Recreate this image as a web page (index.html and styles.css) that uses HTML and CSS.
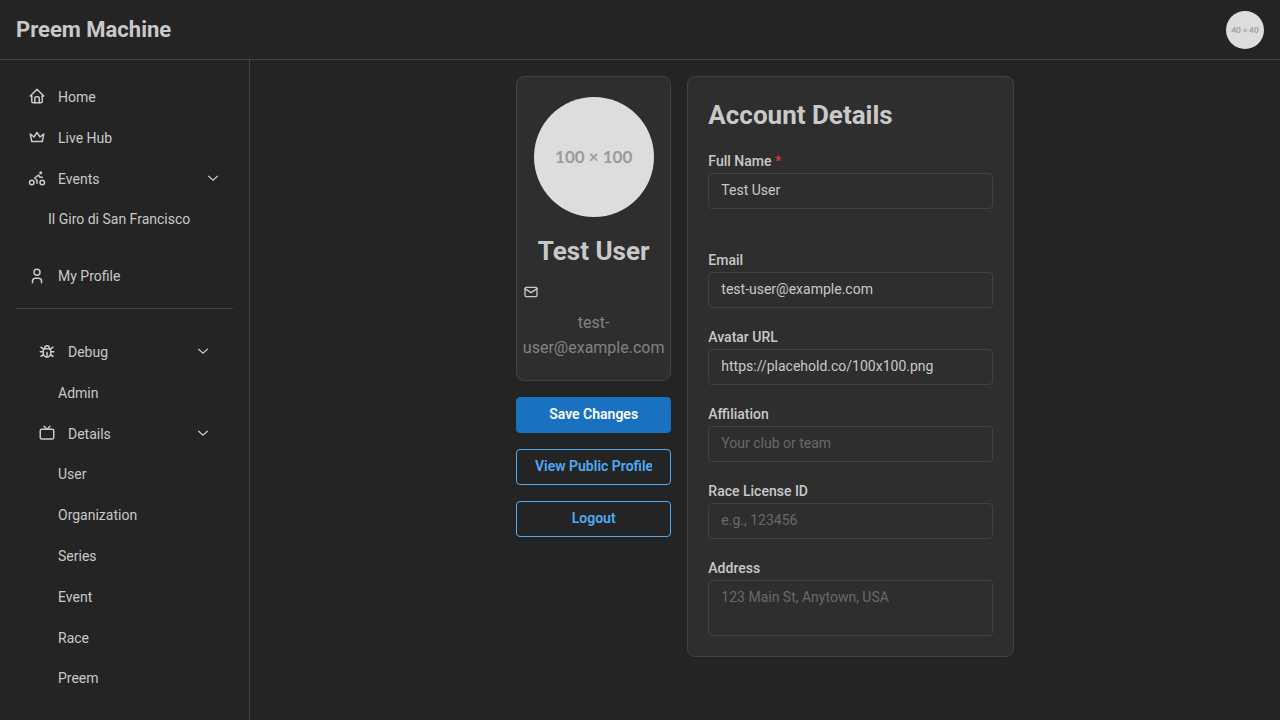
FILE: index.html
```html
<!DOCTYPE html>
<html lang="en">
<head>
<meta charset="utf-8">
<meta name="viewport" content="width=device-width, initial-scale=1">
<title>Preem Machine</title>
<link rel="stylesheet" href="styles.css">
</head>
<body>
<svg class="sprite" aria-hidden="true">
  <symbol id="chevron" viewBox="0 0 16 16"><path d="M3.6 6.2 8 10.2 12.4 6.2"/></symbol>
</svg>
<div class="shell">
  <header class="header">
    <h1 class="brand">Preem Machine</h1>
    <span class="avatar avatar-small">40 × 40</span>
  </header>

  <nav class="sidebar">
    <ul class="nav-list">
      <li><a class="nav-link" href="#">
        <svg class="icon" viewBox="0 0 24 24"><path d="M5 12H3l9-9 9 9h-2"/><path d="M5 12v7a2 2 0 0 0 2 2h10a2 2 0 0 0 2-2v-7"/><path d="M9 21v-6a2 2 0 0 1 2-2h2a2 2 0 0 1 2 2v6"/></svg>
        <span class="nav-body"><span class="nav-text">Home</span></span></a></li>
      <li><a class="nav-link" href="#">
        <svg class="icon" viewBox="0 0 24 24"><path d="m12 6 4 6 5-4-2 10H5L3 8l5 4z"/></svg>
        <span class="nav-body"><span class="nav-text">Live Hub</span></span></a></li>
      <li><a class="nav-link" href="#">
        <svg class="icon" viewBox="0 0 24 24"><circle cx="5" cy="18" r="3"/><circle cx="19" cy="18" r="3"/><path d="M12 19v-4l-3-3 5-4 2 3h3"/><circle cx="17" cy="5" r="1"/></svg>
        <span class="nav-body"><span class="nav-text">Events</span></span>
        <svg class="chevron"><use href="#chevron"/></svg></a>
        <ul class="nav-list nav-children">
          <li><a class="nav-link" href="#"><span class="nav-body"><span class="nav-text">Il Giro di San Francisco</span></span></a></li>
        </ul></li>
    </ul>
    <ul class="nav-list nav-profile">
      <li><a class="nav-link" href="#">
        <svg class="icon" viewBox="0 0 24 24"><circle cx="12" cy="7" r="4"/><path d="M6 21v-2a4 4 0 0 1 4-4h4a4 4 0 0 1 4 4v2"/></svg>
        <span class="nav-body"><span class="nav-text">My Profile</span></span></a></li>
    </ul>
    <hr class="divider">
    <ul class="nav-list nav-debug">
      <li><a class="nav-link" href="#">
        <svg class="icon" viewBox="0 0 24 24"><path d="M9 9V8a3 3 0 0 1 6 0v1"/><path d="M8 9h8a6 6 0 0 1 1 3v3a5 5 0 0 1-10 0v-3a6 6 0 0 1 1-3"/><path d="M3 13h4M17 13h4M12 20v-6M4 19l3.35-2M20 19l-3.35-2M4 7l3.75 2.4M20 7l-3.75 2.4"/></svg>
        <span class="nav-body"><span class="nav-text">Debug</span></span>
        <svg class="chevron"><use href="#chevron"/></svg></a>
        <ul class="nav-list nav-children">
          <li><a class="nav-link" href="#"><span class="nav-body"><span class="nav-text">Admin</span></span></a></li>
        </ul></li>
      <li><a class="nav-link" href="#">
        <svg class="icon" viewBox="0 0 24 24"><rect x="3" y="7" width="18" height="13" rx="2"/><path d="m16 3-4 4-4-4"/></svg>
        <span class="nav-body"><span class="nav-text">Details</span></span>
        <svg class="chevron"><use href="#chevron"/></svg></a>
        <ul class="nav-list nav-children">
          <li><a class="nav-link" href="#"><span class="nav-body"><span class="nav-text">User</span></span></a></li>
          <li><a class="nav-link" href="#"><span class="nav-body"><span class="nav-text">Organization</span></span></a></li>
          <li><a class="nav-link" href="#"><span class="nav-body"><span class="nav-text">Series</span></span></a></li>
          <li><a class="nav-link" href="#"><span class="nav-body"><span class="nav-text">Event</span></span></a></li>
          <li><a class="nav-link" href="#"><span class="nav-body"><span class="nav-text">Race</span></span></a></li>
          <li><a class="nav-link" href="#"><span class="nav-body"><span class="nav-text">Preem</span></span></a></li>
        </ul></li>
    </ul>
  </nav>

  <main class="main">
    <form class="account">
      <div class="profile">
        <section class="card profile-card">
          <span class="avatar avatar-large">100 × 100</span>
          <h2 class="title">Test User</h2>
          <div class="contact">
            <svg class="icon icon-mail" viewBox="0 0 24 24"><rect x="3" y="5" width="18" height="14" rx="2"/><path d="m3 7 9 6 9-6"/></svg>
            <p class="contact-text">test-user@example.com</p>
          </div>
        </section>
        <button class="button button-filled" type="submit"><span class="button-label">Save Changes</span></button>
        <button class="button" type="button"><span class="button-label">View Public Profile</span></button>
        <button class="button" type="button"><span class="button-label">Logout</span></button>
      </div>

      <section class="card details-card">
        <h2 class="title">Account Details</h2>
        <div class="field field-name">
          <label class="label" for="name">Full Name <span class="required">*</span></label>
          <input class="input" id="name" type="text" value="Test User">
        </div>
        <div class="field">
          <label class="label" for="email">Email</label>
          <input class="input" id="email" type="email" value="test-user@example.com">
        </div>
        <div class="field">
          <label class="label" for="avatar">Avatar URL</label>
          <input class="input" id="avatar" type="text" value="https://placehold.co/100x100.png">
        </div>
        <div class="field">
          <label class="label" for="affiliation">Affiliation</label>
          <input class="input" id="affiliation" type="text" placeholder="Your club or team">
        </div>
        <div class="field">
          <label class="label" for="license">Race License ID</label>
          <input class="input" id="license" type="text" placeholder="e.g., 123456">
        </div>
        <div class="field">
          <label class="label" for="address">Address</label>
          <textarea class="input textarea" id="address" rows="2" placeholder="123 Main St, Anytown, USA"></textarea>
        </div>
      </section>
    </form>
  </main>
</div>
</body>
</html>
```

FILE: styles.css
```css
* {
  box-sizing: border-box;
}

body {
  margin: 0;
  background: #242424;
  color: #c9c9c9;
  font-family: Roboto, "Liberation Sans", sans-serif;
  font-size: 16px;
  line-height: 1.55;
}

h1, h2, p, ul {
  margin: 0;
  padding: 0;
}

.sprite {
  display: none;
}

.shell {
  display: grid;
  grid-template-columns: 250px minmax(0, 1fr);
  grid-template-rows: 60px auto;
  min-height: 100vh;
}

.header {
  grid-column: 1 / -1;
  display: flex;
  align-items: center;
  justify-content: space-between;
  padding: 0 16px;
  border-bottom: 1px solid #424242;
}

.brand {
  padding-top: 1px;
  font-size: 22px;
  font-weight: 700;
  line-height: 32px;
}

.avatar {
  display: flex;
  align-items: center;
  justify-content: center;
  flex: none;
  padding-top: 1px;
  border-radius: 50%;
  background: #dddddd;
  color: #9b9b9b;
  font-family: Lato, sans-serif;
  font-weight: 700;
  white-space: nowrap;
}

.avatar-small {
  width: 38px;
  height: 38px;
  font-size: 8px;
}

.avatar-large {
  width: 120px;
  height: 120px;
  font-size: 17px;
}

.sidebar {
  padding: 16px;
  border-right: 1px solid #424242;
}

.nav-list {
  list-style: none;
}

.nav-link {
  display: flex;
  align-items: center;
  gap: 12px;
  padding: 8px 12px;
  color: inherit;
  text-decoration: none;
}

.nav-body {
  flex: 1;
  margin: 1px 0 -1px;
}

.nav-text {
  font-size: 14px;
}

.nav-children {
  padding-left: 20px;
}

.nav-profile {
  margin-top: 16px;
}

.nav-debug {
  padding: 10px;
}

.divider {
  margin: 12px 0;
  border: 0;
  border-top: 1px solid #424242;
}

.icon {
  flex: none;
  width: 18px;
  height: 18px;
  fill: none;
  stroke: currentColor;
  stroke-width: 2;
  stroke-linecap: round;
  stroke-linejoin: round;
}

.icon-mail {
  width: 16px;
  height: 16px;
}

.chevron {
  flex: none;
  width: 16px;
  height: 16px;
  fill: none;
  stroke: currentColor;
  stroke-width: 1.2;
  stroke-linecap: round;
}

.main {
  padding: 16px;
}

.account {
  display: grid;
  grid-template-columns: repeat(12, minmax(0, 1fr));
  gap: 16px;
  align-items: start;
  max-width: 498px;
  margin: 0 auto;
}

.profile {
  grid-column: span 4;
  display: flex;
  flex-direction: column;
  gap: 16px;
}

.card {
  display: flex;
  flex-direction: column;
  gap: 16px;
  padding: 20px;
  border: 1px solid #424242;
  border-radius: 8px;
  background: #2e2e2e;
}

.profile-card {
  align-items: center;
}

.details-card {
  grid-column: span 8;
}

.title {
  padding-top: 1px;
  font-size: 26px;
  font-weight: 700;
  line-height: 34px;
  white-space: nowrap;
}

.contact {
  display: flex;
  flex-wrap: wrap;
  gap: 10px;
}

.contact-text {
  color: #828282;
  line-height: 25px;
  text-align: center;
}

.button {
  height: 36px;
  padding: 0 18px 2px;
  border: 1px solid #4dabf7;
  border-radius: 4px;
  background: transparent;
  color: #4dabf7;
  font-family: inherit;
  font-size: 14px;
  font-weight: 600;
  line-height: 1;
}

.button-filled {
  border-color: #1971c2;
  background: #1971c2;
  color: #ffffff;
}

.button-label {
  display: flex;
  align-items: center;
  justify-content: safe center;
  height: 100%;
  overflow: hidden;
  white-space: nowrap;
}

.field-name {
  margin-bottom: 22px;
}

.label {
  display: block;
  padding-top: 1px;
  font-size: 14px;
  font-weight: 500;
  line-height: 24px;
}

.required {
  color: #e03131;
}

.input {
  display: block;
  width: 100%;
  height: 36px;
  padding: 0 12px 2px;
  border: 1px solid #424242;
  border-radius: 4px;
  background: #2e2e2e;
  color: #c9c9c9;
  font-family: inherit;
  font-size: 14px;
}

.input::placeholder {
  color: #696969;
}

.textarea {
  height: 56px;
  padding: 5px 12px;
  line-height: 22px;
  resize: none;
}
```
